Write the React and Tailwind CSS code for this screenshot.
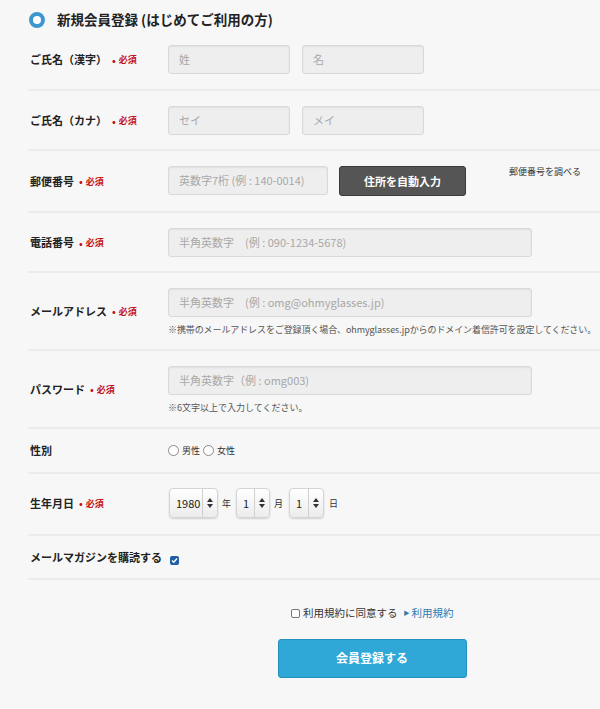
import React from 'react';

const Required = () => (
  <span className="ml-[5px] inline-flex items-center text-[9px] font-bold text-[#c4121a]">
    <span className="mr-[3px] text-[10px] leading-none">•</span>必須
  </span>
);

const Field = ({ placeholder, className = '' }) => (
  <div
    className={`h-[29px] flex items-center pl-[10px] bg-[#eeeeee] border border-[#d9d9d9] rounded-[3px] shadow-[inset_0_1px_2px_rgba(0,0,0,0.06)] text-[11px] text-[#a8a8a8] ${className}`}
  >
    {placeholder}
  </div>
);

const Row = ({ label, required, children, className = '' }) => (
  <div className={`flex items-center border-b-2 border-[#ececec] ${className}`}>
    <div className="w-[140px] shrink-0 text-[11px] font-bold text-[#222] flex items-center pl-[2px]">
      {label}
      {required && <Required />}
    </div>
    <div className="flex-1">{children}</div>
  </div>
);

const Arrows = () => (
  <svg width="6" height="10" viewBox="0 0 6 10">
    <path d="M3 0 L6 4 L0 4 Z" fill="#333" />
    <path d="M3 10 L6 6 L0 6 Z" fill="#333" />
  </svg>
);

const Select = ({ value, width }) => (
  <div
    className={`h-[30px] flex items-center rounded-[4px] border border-[#d4d4d4] bg-gradient-to-b from-white to-[#ececec] shadow-[0_1px_2px_rgba(0,0,0,0.15)] ${width}`}
  >
    <span className="flex-1 pl-[6px] text-[11px] text-[#222]">{value}</span>
    <span className="h-full w-px bg-[#d0d0d0]" />
    <span className="w-[14px] flex justify-center">
      <Arrows />
    </span>
  </div>
);

const Radio = ({ label }) => (
  <span className="inline-flex items-center gap-[3px] text-[9px] text-[#333]">
    <span className="w-[11px] h-[11px] rounded-full border border-[#8a8a8a] bg-white" />
    {label}
  </span>
);

export default function App() {
  return (
    <div className="min-h-[709px] w-[600px] bg-[#f7f7f7] font-['Hiragino_Kaku_Gothic_ProN','Noto_Sans_CJK_JP',sans-serif] leading-none overflow-hidden">
      <div className="pl-[28px]">
        {/* Header */}
        <div className="flex items-center pt-[12px] pb-[2px]">
          <span className="ml-[1px] w-[16px] h-[16px] rounded-full border-[4px] border-[#3d96cf] bg-white" />
          <h1 className="ml-[12px] text-[13.5px] font-bold text-[#222]">新規会員登録 (はじめてご利用の方)</h1>
        </div>

        <Row label="ご氏名（漢字）" required className="pt-[15px] pb-[15px]">
          <div className="flex gap-[12px]">
            <Field placeholder="姓" className="w-[122px]" />
            <Field placeholder="名" className="w-[122px]" />
          </div>
        </Row>

        <Row label="ご氏名（カナ）" required className="pt-[15px] pb-[14px]">
          <div className="flex gap-[12px]">
            <Field placeholder="セイ" className="w-[122px]" />
            <Field placeholder="メイ" className="w-[122px]" />
          </div>
        </Row>

        <Row label="郵便番号" required className="pt-[15px] pb-[15px]">
          <div className="flex items-start">
            <Field placeholder="英数字7桁 (例 : 140-0014)" className="w-[160px]" />
            <button className="ml-[11px] w-[127px] h-[30px] rounded-[3px] bg-[#555555] border border-[#3a3a3a] text-white text-[11px] font-bold">
              住所を自動入力
            </button>
            <span className="ml-[43px] mt-[1px] text-[9px] text-[#333]">郵便番号を調べる</span>
          </div>
        </Row>

        <Row label="電話番号" required className="pt-[15px] pb-[14px]">
          <Field placeholder="半角英数字　(例 : 090-1234-5678)" className="w-[364px]" />
        </Row>

        <Row label="メールアドレス" required className="pt-[15px] pb-[15px]">
          <Field placeholder="半角英数字　(例 : omg@ohmyglasses.jp)" className="w-[364px]" />
          <p className="mt-[8px] text-[9px] text-[#555] whitespace-nowrap tracking-[-0.1px]">
            ※携帯のメールアドレスをご登録頂く場合、ohmyglasses.jpからのドメイン着信許可を設定してください。
          </p>
        </Row>

        <Row label="パスワード" required className="pt-[15px] pb-[15px]">
          <Field placeholder="半角英数字（例 : omg003)" className="w-[364px]" />
          <p className="mt-[8px] text-[9px] text-[#555]">※6文字以上で入力してください。</p>
        </Row>

        <Row label="性別" className="h-[45px]">
          <div className="flex items-center gap-[3px]">
            <Radio label="男性" />
            <Radio label="女性" />
          </div>
        </Row>

        <Row label="生年月日" required className="pt-[14px] pb-[16px]">
          <div className="flex items-center text-[9px] text-[#333]">
            <span className="ml-[1px]" />
            <Select value="1980" width="w-[49px]" />
            <span className="ml-[4px] mr-[5px]">年</span>
            <Select value="1" width="w-[34px]" />
            <span className="ml-[4px] mr-[6px]">月</span>
            <Select value="1" width="w-[35px]" />
            <span className="ml-[5px]">日</span>
          </div>
        </Row>

        <Row label="メールマガジンを購読する" className="h-[44px]">
          <span className="ml-[2px] inline-flex w-[9px] h-[9px] rounded-[2px] bg-[#1f5fa8] items-center justify-center">
            <svg width="7" height="7" viewBox="0 0 7 7">
              <path d="M1 3.6 L2.8 5.3 L6 1.5" stroke="white" strokeWidth="1.4" fill="none" />
            </svg>
          </span>
        </Row>
      </div>

      {/* Agreement */}
      <div className="flex items-center pl-[291px] pt-[28px]">
        <span className="w-[9px] h-[9px] rounded-[2px] border border-[#777] bg-white" />
        <span className="ml-[3px] text-[10.5px] text-[#333]">利用規約に同意する</span>
        <span className="ml-[6px] text-[6px] text-[#2a7ab0]">▶</span>
        <span className="ml-[2px] text-[10.5px] text-[#2a7ab0]">利用規約</span>
      </div>

      <div className="flex justify-center pl-[144px] pt-[20px]">
        <button className="w-[189px] h-[39px] rounded-[3px] bg-[#2fa8d8] border border-[#2590c0] text-white text-[12px] font-bold">
          会員登録する
        </button>
      </div>
    </div>
  );
}
